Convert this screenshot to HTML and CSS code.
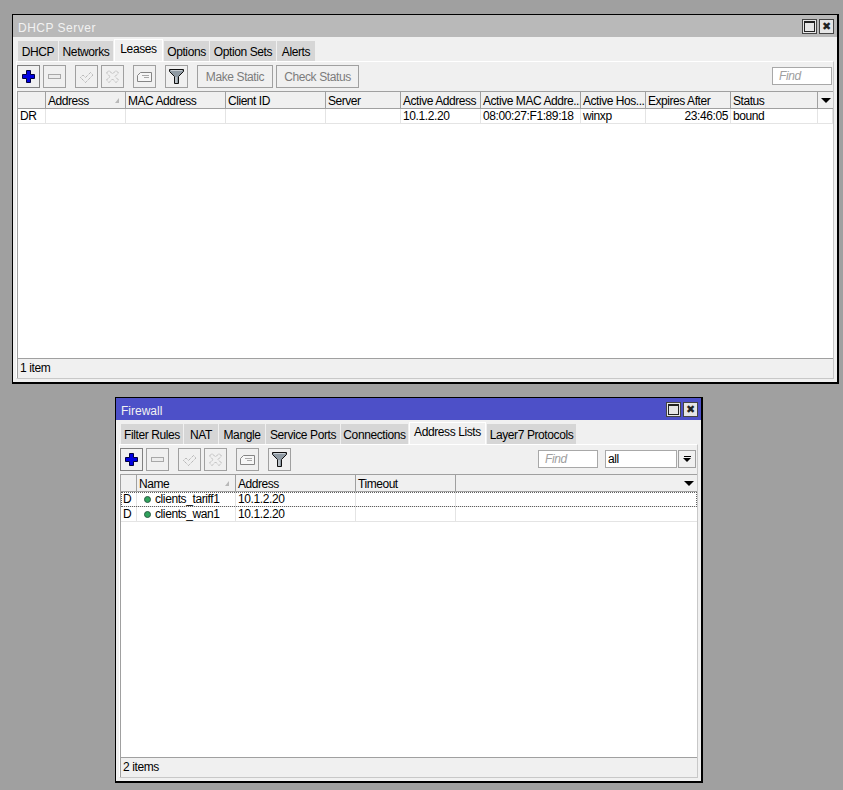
FILE: index.html
```html
<!DOCTYPE html>
<html lang="en">

<head>
    <meta charset="UTF-8">
    <meta name="viewport" content="width=device-width, initial-scale=1.0">
    <title>Winbox</title>
    <link rel="stylesheet" href="styles.css">
</head>

<body>
    <svg class="defs" width="0" height="0">
        <symbol id="i-add" viewBox="0 0 23 23"><path d="M9.500 5.500h4v4h4v4h-4v4h-4v-4h-4v-4h4z" fill="#0000e0" stroke="#000040"/></symbol>
        <symbol id="i-minus" viewBox="0 0 23 23"><rect x="5.500" y="9.500" width="12" height="4" fill="#ececec" stroke="#a8a8a8"/></symbol>
        <symbol id="i-check" viewBox="0 0 23 23"><path d="M5.500 12.500l2.500-2.500 2.500 2.500 5-5 2.500 2.500-7.500 7.500z" fill="#f0f0f0" stroke="#a0a0a0" stroke-dasharray="1 1"/></symbol>
        <symbol id="i-cross" viewBox="0 0 23 23"><path d="M5.500 8l2.500-2.500 3.500 3.500L15 5.500 17.500 8 14 11.500l3.500 3.500-2.500 2.500-3.500-3.500L8 17.500 5.500 15 9 11.500z" fill="#f0f0f0" stroke="#a0a0a0" stroke-dasharray="1 1"/></symbol>
        <symbol id="i-note" viewBox="0 0 23 23"><path d="M4.500 10.500l3-3h11v9h-14z" fill="#f6f6f6" stroke="#858585"/><path d="M9 10.500h7M11 12.500h5" stroke="#a8a8a8"/></symbol>
        <symbol id="i-filter" viewBox="0 0 23 23"><path d="M4.500 4.500h14v2l-5 5v7h-4v-7l-5-5z" fill="#8f9aa3" stroke="#111"/><path d="M11 12v6" stroke="#e4e7ea"/><path d="M6 5.500h11" stroke="#c8ced3"/></symbol>
    </svg>

    <!-- dhcp window -->
    <div class="window window-dhcp">
        <div class="titlebar titlebar-idle">
            <span class="title title-wide">DHCP Server</span>
            <div class="win-btns">
                <div class="win-btn"><span class="win-max"></span></div>
                <div class="win-btn win-close">&#10006;</div>
            </div>
        </div>
        <div class="tabs">
            <div class="tab tab-w40">DHCP</div>
            <div class="tab tab-w54">Networks</div>
            <div class="tab tab-active tab-w49">Leases</div>
            <div class="tab tab-w45">Options</div>
            <div class="tab tab-w66">Option Sets</div>
            <div class="tab tab-w38">Alerts</div>
        </div>
        <div class="pane">
            <div class="toolbar">
                <div class="tool-group">
                    <div class="tool tool-on"><svg><use href="#i-add"/></svg></div>
                    <div class="tool"><svg><use href="#i-minus"/></svg></div>
                </div>
                <div class="tool-group">
                    <div class="tool"><svg><use href="#i-check"/></svg></div>
                    <div class="tool"><svg><use href="#i-cross"/></svg></div>
                </div>
                <div class="tool"><svg><use href="#i-note"/></svg></div>
                <div class="tool"><svg><use href="#i-filter"/></svg></div>
                <div class="tool-group">
                    <div class="tool tool-text tool-make">Make Static</div>
                    <div class="tool tool-text tool-check">Check Status</div>
                </div>
                <div class="find">Find</div>
            </div>
            <div class="table">
                <div class="row head cols-leases">
                    <div class="cell"></div>
                    <div class="cell sorted">Address</div>
                    <div class="cell">MAC Address</div>
                    <div class="cell">Client ID</div>
                    <div class="cell">Server</div>
                    <div class="cell">Active Address</div>
                    <div class="cell">Active MAC Addre...</div>
                    <div class="cell">Active Hos...</div>
                    <div class="cell">Expires After</div>
                    <div class="cell">Status</div>
                    <div class="cell cell-menu"><span class="arrow"></span></div>
                </div>
                <div class="row cols-leases">
                    <div class="cell">DR</div>
                    <div class="cell"></div>
                    <div class="cell"></div>
                    <div class="cell"></div>
                    <div class="cell"></div>
                    <div class="cell">10.1.2.20</div>
                    <div class="cell">08:00:27:F1:89:18</div>
                    <div class="cell">winxp</div>
                    <div class="cell cell-right">23:46:05</div>
                    <div class="cell">bound</div>
                    <div class="cell"></div>
                </div>
            </div>
            <div class="status">1 item</div>
        </div>
    </div>

    <!-- firewall window -->
    <div class="window window-firewall">
        <div class="titlebar titlebar-active">
            <span class="title">Firewall</span>
            <div class="win-btns">
                <div class="win-btn"><span class="win-max"></span></div>
                <div class="win-btn win-close">&#10006;</div>
            </div>
        </div>
        <div class="tabs">
            <div class="tab tab-w62">Filter Rules</div>
            <div class="tab tab-w34">NAT</div>
            <div class="tab tab-w46">Mangle</div>
            <div class="tab tab-w74">Service Ports</div>
            <div class="tab tab-w67">Connections</div>
            <div class="tab tab-active tab-w77">Address Lists</div>
            <div class="tab tab-w89">Layer7 Protocols</div>
        </div>
        <div class="pane">
            <div class="toolbar">
                <div class="tool-group">
                    <div class="tool tool-on"><svg><use href="#i-add"/></svg></div>
                    <div class="tool"><svg><use href="#i-minus"/></svg></div>
                </div>
                <div class="tool-group">
                    <div class="tool"><svg><use href="#i-check"/></svg></div>
                    <div class="tool"><svg><use href="#i-cross"/></svg></div>
                </div>
                <div class="tool"><svg><use href="#i-note"/></svg></div>
                <div class="tool"><svg><use href="#i-filter"/></svg></div>
                <div class="find">Find</div>
                <div class="combo">
                    <div class="combo-value">all</div>
                    <div class="combo-btn"><span class="combo-bar"></span><span class="arrow"></span></div>
                </div>
            </div>
            <div class="table">
                <div class="row head cols-lists">
                    <div class="cell"></div>
                    <div class="cell sorted">Name</div>
                    <div class="cell">Address</div>
                    <div class="cell">Timeout</div>
                    <div class="cell cell-open"></div>
                    <div class="cell cell-menu"><span class="arrow"></span></div>
                </div>
                <div class="row cols-lists row-focus">
                    <div class="cell">D</div>
                    <div class="cell cell-name"><span class="dot"></span>clients_tariff1</div>
                    <div class="cell">10.1.2.20</div>
                    <div class="cell"></div>
                    <div class="cell cell-open"></div>
                    <div class="cell cell-open"></div>
                </div>
                <div class="row cols-lists">
                    <div class="cell">D</div>
                    <div class="cell cell-name"><span class="dot"></span>clients_wan1</div>
                    <div class="cell">10.1.2.20</div>
                    <div class="cell"></div>
                    <div class="cell cell-open"></div>
                    <div class="cell cell-open"></div>
                </div>
            </div>
            <div class="status">2 items</div>
        </div>
    </div>
</body>

</html>
```

FILE: styles.css
```css
html,
body {
    margin: 0;
    height: 100%;
}

body {
    position: relative;
    background-color: #a0a0a0;
    font-family: "Liberation Sans", Arial, sans-serif;
    font-size: 12px;
    letter-spacing: -0.4px;
    color: #000;
    overflow: hidden;
}

.defs {
    position: absolute;
}

.window {
    position: absolute;
    box-sizing: border-box;
    display: flex;
    flex-direction: column;
    background-color: #f0f0f0;
    border: 1px solid #000;
    border-right-width: 2px;
    border-bottom-width: 2px;
}

.window-dhcp {
    left: 12px;
    top: 14px;
    width: 827px;
    height: 370px;
}

.window-firewall {
    left: 115px;
    top: 397px;
    width: 588px;
    height: 386px;
}

.titlebar {
    height: 22px;
    flex: none;
    display: flex;
    align-items: flex-start;
    justify-content: space-between;
    padding: 0 3px 0 5px;
    color: #f2f2f2;
}

.titlebar-idle {
    background-color: #b9b9b9;
}

.titlebar-active {
    background-color: #4d50c8;
}

.title {
    padding-top: 6px;
    letter-spacing: 0;
}

.title-wide {
    letter-spacing: 0.5px;
}

.win-btns {
    display: flex;
    gap: 2px;
    padding-top: 4px;
}

.win-btn {
    box-sizing: border-box;
    width: 15px;
    height: 15px;
    border: 1px solid #444;
    background-color: #e6e6e6;
    display: flex;
    align-items: center;
    justify-content: center;
}

.win-max {
    box-sizing: border-box;
    width: 11px;
    height: 11px;
    border: 1px solid #222;
    border-top-width: 2px;
}

.win-close {
    font-family: "DejaVu Sans", sans-serif;
    font-size: 11px;
    letter-spacing: 0;
    color: #222;
}

.tabs {
    flex: none;
    display: flex;
    align-items: flex-end;
    gap: 1px;
    height: 24px;
    padding-left: 5px;
}

.tab {
    box-sizing: border-box;
    height: 20px;
    padding-top: 1px;
    background-color: #d6d6d6;
    display: flex;
    align-items: center;
    justify-content: center;
    white-space: nowrap;
}

.tab-active {
    height: 22px;
    padding-top: 0;
    padding-bottom: 3px;
    background-color: #f0f0f0;
    border: 1px solid #fff;
    border-bottom: 0;
}

.tab-w34 { width: 34px; }
.tab-w38 { width: 38px; }
.tab-w40 { width: 40px; }
.tab-w45 { width: 45px; }
.tab-w46 { width: 46px; }
.tab-w49 { width: 49px; }
.tab-w54 { width: 54px; }
.tab-w62 { width: 62px; }
.tab-w66 { width: 66px; }
.tab-w67 { width: 67px; }
.tab-w74 { width: 74px; }
.tab-w77 { width: 77px; }
.tab-w89 { width: 89px; }

.pane {
    flex: 1;
    min-height: 0;
    display: flex;
    flex-direction: column;
    margin: 0 3px 3px 3px;
    border-top: 1px solid #fff;
    border-left: 1px solid #fff;
    border-right: 1px solid #c8c8c8;
    border-bottom: 1px solid #c8c8c8;
}

.toolbar {
    box-sizing: border-box;
    flex: none;
    display: flex;
    align-items: flex-start;
    gap: 9px;
    height: 29px;
    padding: 3px 1px 0 0;
}

.tool-group {
    display: flex;
    gap: 3px;
}

.tool {
    box-sizing: border-box;
    width: 23px;
    height: 23px;
    border: 1px solid #a0a0a0;
    display: flex;
    align-items: center;
    justify-content: center;
}

.tool svg {
    width: 23px;
    height: 23px;
    flex: none;
}

.tool-on {
    border-color: #808080;
}

.tool-text {
    color: #7c7c7c;
}

.tool-make {
    width: 76px;
}

.tool-check {
    width: 83px;
}

.find {
    box-sizing: border-box;
    width: 60px;
    height: 18px;
    margin-top: 2px;
    margin-left: auto;
    background-color: #fff;
    border: 1px solid #a8a8a8;
    padding-left: 6px;
    line-height: 16px;
    font-style: italic;
    color: #a0a0a0;
}

.combo {
    display: flex;
    gap: 1px;
    margin-top: 2px;
    margin-left: -2px;
}

.combo-value {
    box-sizing: border-box;
    width: 72px;
    height: 18px;
    background-color: #fff;
    border: 1px solid #a8a8a8;
    padding-left: 2px;
    line-height: 16px;
}

.combo-btn {
    box-sizing: border-box;
    width: 18px;
    height: 18px;
    border: 1px solid #a0a0a0;
    display: flex;
    flex-direction: column;
    align-items: center;
    justify-content: center;
    gap: 1px;
}

.combo-bar {
    width: 7px;
    height: 1px;
    background-color: #000;
}

.table {
    flex: 1;
    min-height: 0;
    background-color: #fff;
    border: 1px solid #a0a0a0;
    border-right: 0;
}

.row {
    box-sizing: border-box;
    display: grid;
    height: 15px;
    border-bottom: 1px solid #e4e4e4;
}

.cols-leases {
    grid-template-columns: 28px 80px 100px 100px 75px 80px 100px 65px 85px 87px 15px;
}

.cols-lists {
    grid-template-columns: 16px 99px 120px 100px 225px 16px;
}

.head {
    height: 17px;
    background-color: #f0f0f0;
    border-bottom: 1px solid #a0a0a0;
}

.head .cell {
    line-height: 18px;
    border-right-color: #a0a0a0;
    letter-spacing: -0.45px;
}

.cell {
    box-sizing: border-box;
    padding-left: 2px;
    line-height: 14px;
    white-space: nowrap;
    overflow: hidden;
    border-right: 1px solid #e4e4e4;
}

.head .cell-open,
.cell-open {
    border-right: 0;
}

.cell-right {
    text-align: right;
    padding-right: 2px;
}

.cell-menu {
    display: flex;
    align-items: center;
    justify-content: center;
    padding-left: 0;
}

.head .cell-menu {
    border-right: 0;
}

.cell-name {
    display: flex;
    align-items: center;
    padding-left: 7px;
}

.sorted {
    position: relative;
}

.sorted::after {
    content: "";
    position: absolute;
    right: 6px;
    top: 6px;
    border-left: 4px solid transparent;
    border-bottom: 5px solid #b8b8b8;
}

.row-focus {
    outline: 1px dotted #606060;
    outline-offset: -1px;
}

.dot {
    box-sizing: border-box;
    width: 7px;
    height: 7px;
    margin-right: 4px;
    border-radius: 50%;
    background-color: #2fa35c;
    border: 1px solid #2d5c46;
}

.arrow {
    width: 0;
    height: 0;
    border-left: 5px solid transparent;
    border-right: 5px solid transparent;
    border-top: 5px solid #000;
}

.combo-btn .arrow {
    border-left-width: 4px;
    border-right-width: 4px;
    border-top-width: 4px;
}

.status {
    flex: none;
    height: 19px;
    line-height: 18px;
    padding-left: 2px;
    border-left: 1px solid #a0a0a0;
}
```
